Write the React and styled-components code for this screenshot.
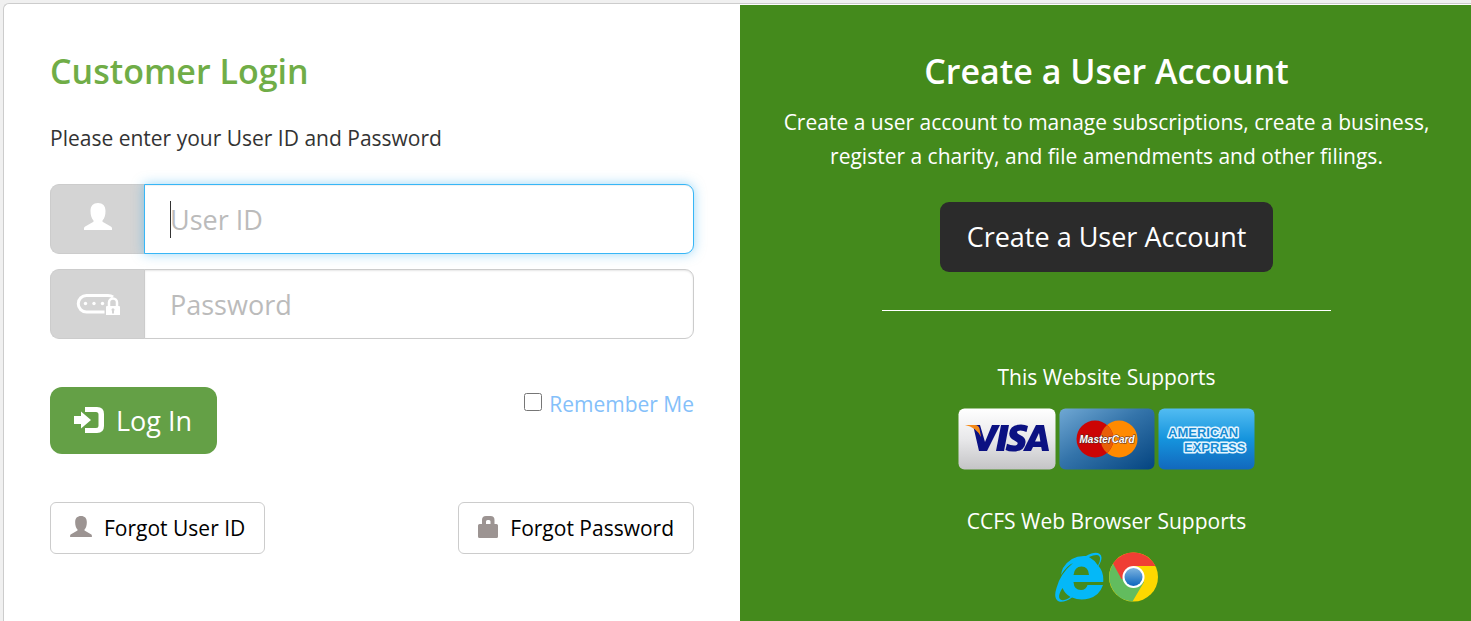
import React from "react";
import styled, { createGlobalStyle, css } from "styled-components";

const GlobalStyle = createGlobalStyle`
  *, *::before, *::after { box-sizing: border-box; }
  body {
    margin: 0;
    background: #f0f0f0;
    color: #333;
    font-family: "Open Sans", "Noto Sans", sans-serif;
    font-size: 21px;
    line-height: 34px;
  }
  button, input { font: inherit; }
`;

const Page = styled.div`
  min-height: 100vh;
  display: flex;
  padding: 3px 0 0 3px;
`;

const Panel = styled.main`
  flex: 1;
  display: grid;
  grid-template-columns: 736fr 731fr;
  background: #fff;
  border: solid #ccc;
  border-width: 1px 0 0 1px;
  border-radius: 6px 0 0 0;
  padding-top: 1px;
`;

const LoginForm = styled.form`
  padding: 46px;
`;

const SignUp = styled.section`
  display: flex;
  flex-direction: column;
  align-items: center;
  padding: 46px 34px 18px 36px;
  background: #448a1c;
  color: #fff;
  text-align: center;
`;

const Title = styled.h1`
  margin: 0;
  color: ${(p) => p.$color};
  font-size: 34px;
  line-height: 40px;
  font-weight: 600;
`;

const Text = styled.p`
  margin: 0;
`;

const Intro = styled(Text)`
  margin: 30px 0 29px;
`;

const Summary = styled(Text)`
  margin-top: 14px;
`;

const Field = styled.div`
  display: flex;
  height: 70px;
  margin-bottom: 15px;
`;

const Addon = styled.label`
  flex: 0 0 95px;
  display: flex;
  align-items: center;
  justify-content: center;
  background: #d4d4d4;
  border: 1px solid #ccc;
  border-right: 0;
  border-radius: 9px 0 0 9px;
  padding-bottom: ${(p) => p.$lift || 0}px;
`;

const TextInput = styled.input`
  flex: 1;
  min-width: 0;
  margin-left: -1px;
  padding: 2px 25px 0;
  border: 1px solid #ccc;
  border-radius: 0 9px 9px 0;
  outline: none;
  background: #fff;
  color: #333;
  font-size: 27px;
  box-shadow: inset 0 1px 2px rgba(0, 0, 0, 0.1);
  &::placeholder { color: #bbb; opacity: 1; }
  ${(p) => p.$active && css`
    border-color: #37b6f6;
    box-shadow: inset 0 1px 1px rgba(0, 0, 0, 0.06), 0 0 12px rgba(55, 176, 240, 0.5);
    &:placeholder-shown {
      caret-color: transparent;
      background: linear-gradient(#333, #333) 25px center / 1px 37px no-repeat #fff;
    }
  `}
`;

const Row = styled.div`
  display: flex;
  justify-content: space-between;
  align-items: flex-start;
  gap: 16px;
  margin-top: 48px;
`;

const PrimaryButton = styled.button`
  display: flex;
  align-items: center;
  gap: 12px;
  height: 67px;
  padding: 0 25px 0 24px;
  border: 0;
  border-radius: 12px;
  background: #64a046;
  color: #fff;
  font-size: 27px;
  & > svg { margin-bottom: 2px; }
`;

const Remember = styled.label`
  display: flex;
  align-items: center;
  gap: 7px;
  color: #84c0fa;
`;

const Checkbox = styled.input`
  width: 18px;
  height: 18px;
  margin: 0 0 4px;
`;

const OutlineButton = styled.button`
  display: flex;
  align-items: center;
  gap: 12px;
  height: 52px;
  padding: 0 19px;
  border: 1px solid #ccc;
  border-radius: 6px;
  background: #fff;
  color: #000;
  & > svg { margin-bottom: 3px; }
`;

const DarkButton = styled.button`
  height: 70px;
  margin: 29px 0 38px;
  padding: 0 27px;
  border: 0;
  border-radius: 9px;
  background: #2b2b2b;
  color: #fff;
  font-size: 27px;
`;

const Divider = styled.hr`
  width: 449px;
  max-width: 100%;
  margin: 0 0 49px;
  border: 0;
  border-top: 1px solid #fff;
`;

const Icons = styled.div`
  display: flex;
  gap: ${(p) => p.$gap}px;
  margin: ${(p) => p.$margin};
`;

const UserIcon = ({ width, height, color }) => (
  <svg width={width} height={height} viewBox="0 0 28 27" fill={color} aria-hidden="true">
    <path d="M14 0c4.800 0 7.500 2.800 7.500 8 0 4-1 7.500-3 9.500v1.200l8.300 4.800c.8.500 1.200 1 1.200 1.800V27H0v-1.700c0-.8.400-1.300 1.200-1.800l8.300-4.800v-1.200c-2-2-3-5.500-3-9.500 0-5.200 2.700-8 7.500-8z" />
  </svg>
);

const PasswordIcon = () => (
  <svg width="44" height="21" viewBox="0 0 44 21" fill="none" aria-hidden="true">
    <path d="M28.500 18H10.500a8.250 8.250 0 0 1 0-16.500H32q3 0 5 1.500" stroke="#fff" strokeWidth="3" />
    <g fill="#fff">
      <circle cx="9.500" cy="9.500" r="1.700" />
      <circle cx="18" cy="9.500" r="1.700" />
      <circle cx="26.500" cy="9.500" r="1.700" />
    </g>
    <path d="M33 13V8.500a4 4 0 0 1 8 0V13" stroke="#fff" strokeWidth="2.500" />
    <path fillRule="evenodd" fill="#fff" d="M31 12h12q1 0 1 1v8H30v-8q0-1 1-1zm5 5v2.500h2V17a1.500 1.500 0 1 0-2 0z" />
  </svg>
);

const LoginIcon = () => (
  <svg width="30" height="26" viewBox="0 0 30 26" fill="#fff" aria-hidden="true">
    <path d="M0 9h7V4.500l10 8.500-10 8.500V17H0z" />
    <path d="M11 0h12q7 0 7 7v12q0 7-7 7H11v-5h11q2.500 0 2.500-2.500v-11Q24.500 5 22 5H11z" />
  </svg>
);

const LockIcon = () => (
  <svg width="20" height="22" viewBox="0 0 20 22" fill="#9c9492" aria-hidden="true">
    <path fillRule="evenodd" d="M4 8V4q0-4 4-4h4.500q4 0 4 4v4H18.500Q20 8 20 9.500v11q0 1.500-1.500 1.500h-17Q0 22 0 20.500v-11Q0 8 1.500 8zm4 0h4.500V5.500Q12.500 4 11 4H9.500Q8 4 8 5.500z" />
  </svg>
);

const VisaCard = () => (
  <svg width="98" height="62" viewBox="0 0 98 62" role="img" aria-label="Visa">
    <defs>
      <linearGradient id="visa" x2="0" y2="1">
        <stop offset="0" stopColor="#fff" />
        <stop offset="0.500" stopColor="#e8e8ea" />
        <stop offset="1" stopColor="#c4c4c6" />
      </linearGradient>
    </defs>
    <rect x="0.500" y="0.500" width="97" height="61" rx="6" fill="url(#visa)" />
    <g fill="#0b1182">
      <path d="M15 17 21 43h8L42 17h-8L27 34 22 17z" />
      <path d="M43 17h8l-5 26h-8z" />
      <path d="M70 18l-1.500 6q-3-1.500-6-1.500-3.500 0-3.500 1.800 0 1.400 3.500 3 5.500 2.700 5 7.200-.8 9-12.500 9-4.500 0-7.500-1.500l1.500-6.200q3.500 1.700 7 1.700 3.500 0 3.700-2 0-1.500-3.700-3.300-5-2.500-4.700-7Q52 16.500 63 16.500q4 0 7 1.500z" />
      <path fillRule="evenodd" d="M78 17h8l5 26h-7l-.8-4H75l-2 4h-8zm3 8-4 8.500h5.400z" />
    </g>
    <path d="M7 17h10q3.500 0 4.500 3.500L23 29Q18 19 7 17z" fill="#f58a18" />
  </svg>
);

const MasterCard = () => (
  <svg width="96" height="62" viewBox="0 0 96 62" role="img" aria-label="MasterCard">
    <defs>
      <linearGradient id="master" x2="1" y2="1">
        <stop offset="0" stopColor="#70a8d4" />
        <stop offset="0.450" stopColor="#3474aa" />
        <stop offset="1" stopColor="#044480" />
      </linearGradient>
    </defs>
    <rect x="0.500" y="0.500" width="95" height="61" rx="6" fill="url(#master)" />
    <circle cx="60" cy="31" r="18.500" fill="#ff8a00" />
    <circle cx="36" cy="31" r="18.500" fill="#cc0404" />
    <path d="M48 17a18.500 18.500 0 0 1 0 28 18.500 18.500 0 0 1 0-28z" fill="#e85f08" />
    <text x="48" y="35" textAnchor="middle" fontFamily="Liberation Sans, sans-serif" fontSize="10" fontWeight="700" fontStyle="italic" fill="#fff" stroke="#5d2b20" strokeWidth="1" paintOrder="stroke">MasterCard</text>
  </svg>
);

const AmexCard = () => (
  <svg width="97" height="62" viewBox="0 0 97 62" role="img" aria-label="American Express">
    <defs>
      <linearGradient id="amex" x2="0" y2="1">
        <stop offset="0" stopColor="#52bcf2" />
        <stop offset="0.500" stopColor="#1594dd" />
        <stop offset="1" stopColor="#1268bd" />
      </linearGradient>
    </defs>
    <rect x="0.500" y="0.500" width="96" height="61" rx="6" fill="url(#amex)" />
    <g fontFamily="Liberation Sans, sans-serif" fontSize="13" fontWeight="700" fill="#168bd3" stroke="#e4f5ff" strokeWidth="3" strokeLinejoin="round" paintOrder="stroke">
      <text x="10" y="29">AMERICAN</text>
      <text x="26" y="44">EXPRESS</text>
    </g>
  </svg>
);

const ExplorerLogo = () => (
  <svg width="49" height="50" viewBox="0 0 49 50" role="img" aria-label="Internet Explorer">
    <path fillRule="evenodd" fill="#04b8f8" d="M48 33H32.500Q31 38 26 38q-7 0-7.500-8H48.200Q49 20 43.500 14 49 5 44.500 1.700 40 -1 31 4 16 3 8 16q-1.500 3-2 7Q12 13.500 18 11 5 22 1.500 36-2 47 4 49.500q5 1.500 13-4Q25 49 34 46.500 44.500 43.500 48 33zM18.500 23q1-8.500 8-8.500 7 0 7.500 8.500zM34 5q8.500-3.500 10.500-.5 1.700 2.500-1.500 9Q39.500 8 34 5zM7.500 36Q10 42 15.500 45 7 50.500 4.500 46.500 3 43 7.500 36z" />
  </svg>
);

const ChromeLogo = () => (
  <svg width="49" height="50" viewBox="0 0 49 50" role="img" aria-label="Chrome">
    <circle cx="24.500" cy="25" r="24.500" fill="#fdd800" />
    <path d="M24.500 25 4 12A24.500 24.500 0 0 0 23.500 49.500L35 30z" fill="#62bc5e" />
    <path d="M24.500 25 12.500 27 4 11.500A24.500 24.500 0 0 1 46.500 14H24.500z" fill="#f03e34" />
    <circle cx="24.500" cy="25" r="11" fill="#fff" />
    <circle cx="24.500" cy="25" r="9" fill="url(#lens)" />
    <defs>
      <linearGradient id="lens" x2="0" y2="1">
        <stop offset="0" stopColor="#7db4e0" />
        <stop offset="1" stopColor="#0c66be" />
      </linearGradient>
    </defs>
  </svg>
);

export default function App() {
  return (
    <Page>
      <GlobalStyle />
      <Panel>
        <LoginForm onSubmit={(e) => e.preventDefault()}>
          <Title $color="#70ad47">Customer Login</Title>
          <Intro>Please enter your User ID and Password</Intro>
          <Field>
            <Addon htmlFor="user" aria-label="User ID" $lift={5}>
              <UserIcon width={28} height={27} color="#fff" />
            </Addon>
            <TextInput id="user" type="text" placeholder="User ID" $active autoFocus />
          </Field>
          <Field>
            <Addon htmlFor="password" aria-label="Password">
              <PasswordIcon />
            </Addon>
            <TextInput id="password" type="password" placeholder="Password" />
          </Field>
          <Row>
            <PrimaryButton type="submit">
              <LoginIcon />
              Log In
            </PrimaryButton>
            <Remember>
              <Checkbox type="checkbox" />
              Remember Me
            </Remember>
          </Row>
          <Row>
            <OutlineButton type="button">
              <UserIcon width={22} height={21} color="#9c9492" />
              Forgot User ID
            </OutlineButton>
            <OutlineButton type="button">
              <LockIcon />
              Forgot Password
            </OutlineButton>
          </Row>
        </LoginForm>
        <SignUp>
          <Title as="h2" $color="#fff">Create a User Account</Title>
          <Summary>
            Create a user account to manage subscriptions, create a business, register a charity, and file amendments and other filings.
          </Summary>
          <DarkButton type="button">Create a User Account</DarkButton>
          <Divider />
          <Text>This Website Supports</Text>
          <Icons $gap={3} $margin="14px 0 34px">
            <VisaCard />
            <MasterCard />
            <AmexCard />
          </Icons>
          <Text>CCFS Web Browser Supports</Text>
          <Icons $gap={5} $margin="14px 0 0">
            <ExplorerLogo />
            <ChromeLogo />
          </Icons>
        </SignUp>
      </Panel>
    </Page>
  );
}
